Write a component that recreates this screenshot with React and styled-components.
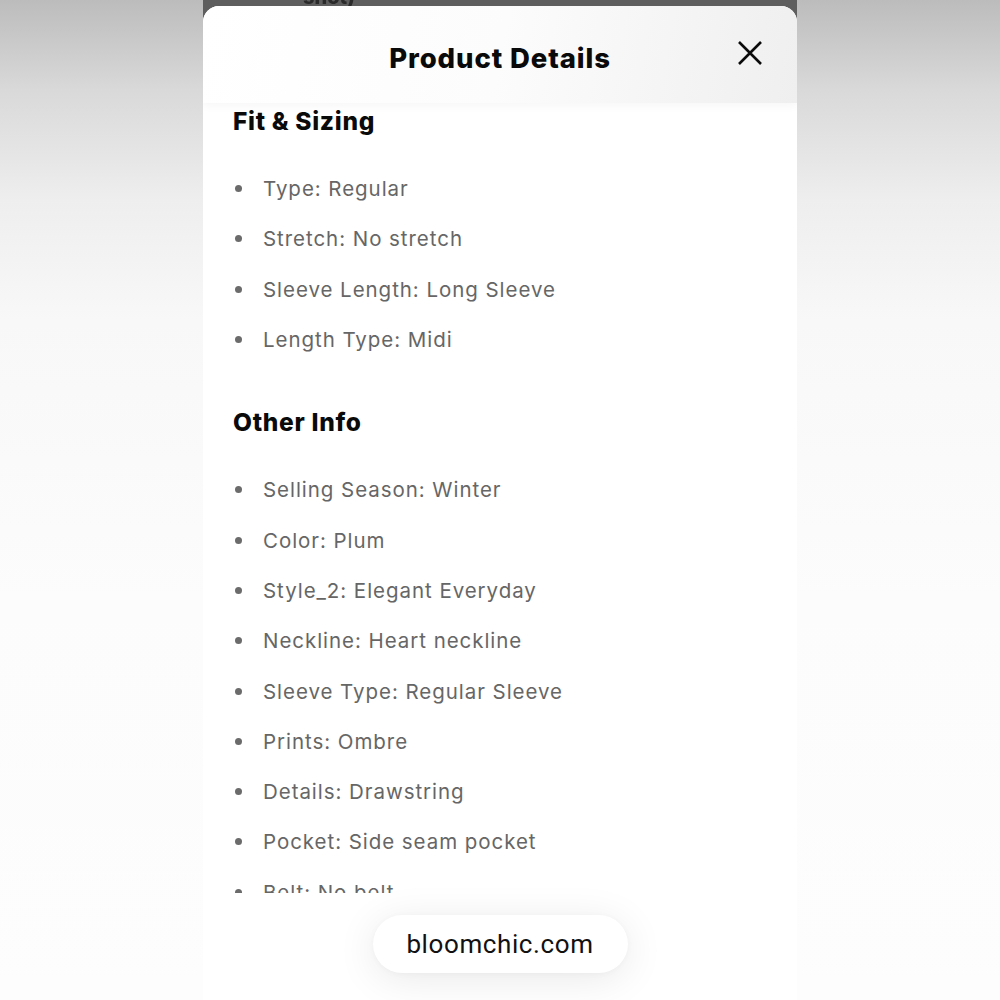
import React from "react";
import styled, { createGlobalStyle } from "styled-components";

const Global = createGlobalStyle`
  html, body { margin: 0; padding: 0; }
  body {
    width: 1000px; height: 1000px; overflow: hidden;
    font-family: "Inter", "Liberation Sans", sans-serif;
    background: linear-gradient(180deg, #bcbcbc 0px, #d9d9d9 90px, #eeeeee 200px, #f8f8f8 320px, #fcfcfc 600px, #fdfdfd 1000px);
  }
`;

const Stage = styled.div`
  width: 1000px;
  height: 1000px;
  display: flex;
  justify-content: center;
`;

const Phone = styled.div`
  width: 594px;
  height: 1000px;
  display: flex;
  flex-direction: column;
  background: #5e5e5e;
  overflow: hidden;
`;

const TopStrip = styled.div`
  height: 6px;
  flex: none;
  overflow: hidden;
  padding-left: 100px;
  font-weight: 800;
  font-size: 20px;
  line-height: 20px;
  color: #2a2a2a;
  filter: blur(0.6px);
  & > span { display: block; margin-top: -13px; }
`;

const Sheet = styled.div`
  flex: 1;
  display: flex;
  flex-direction: column;
  background: #ffffff;
  border-radius: 16px 16px 0 0;
  overflow: hidden;
`;

const Header = styled.header`
  height: 97px;
  flex: none;
  display: grid;
  grid-template-columns: 1fr auto 1fr;
  align-items: center;
  background: linear-gradient(100deg, #ffffff 0%, #fcfcfc 50%, #efefef 100%);
  box-shadow: 0 2px 10px rgba(0, 0, 0, 0.045);
  position: relative;
  z-index: 1;
`;

const Title = styled.h1`
  grid-column: 2;
  margin: 0;
  padding-top: 6px;
  font-size: 27.5px;
  font-weight: 800;
  color: #0a0a0a;
  letter-spacing: 0.9px;
`;

const Close = styled.button`
  grid-column: 3;
  justify-self: end;
  margin-right: 33px;
  margin-bottom: 4px;
  width: 28px;
  height: 28px;
  padding: 0;
  border: none;
  background: none;
  display: flex;
  align-items: center;
  justify-content: center;
`;

const Body = styled.div`
  height: 790px;
  flex: none;
  overflow: hidden;
  padding: 0 30px;
`;

const SectionTitle = styled.h2`
  margin: 0;
  padding-top: ${(p) => p.$top}px;
  font-size: 24.5px;
  font-weight: 800;
  color: #0a0a0a;
  line-height: 28px;
  letter-spacing: 0.7px;
`;

const List = styled.ul`
  list-style: none;
  margin: 0;
  padding: 41px 0 0 0;
  display: flex;
  flex-direction: column;
  gap: 25px;
`;

const Item = styled.li`
  display: flex;
  align-items: center;
  height: 25.3px;
  font-size: 20.5px;
  color: #666666;
  font-weight: 400;
  letter-spacing: 0.95px;
  &::before {
    content: "";
    width: 7px;
    height: 7px;
    border-radius: 50%;
    background: #6b6b6b;
    margin-left: 2px;
    margin-right: 21px;
    flex: none;
  }
`;

const Footer = styled.div`
  flex: 1;
  display: flex;
  justify-content: center;
  align-items: flex-start;
  padding-top: 22px;
  background: #ffffff;
`;

const Pill = styled.div`
  width: 255px;
  height: 58px;
  border-radius: 29px;
  background: #ffffff;
  display: flex;
  align-items: center;
  justify-content: center;
  font-family: "Roboto", "Liberation Sans", sans-serif;
  font-size: 26px;
  letter-spacing: 0.6px;
  color: #111111;
  box-shadow: 0 6px 40px rgba(0, 0, 0, 0.09), 0 1px 6px rgba(0, 0, 0, 0.03);
`;

const fit = [
  "Type: Regular",
  "Stretch: No stretch",
  "Sleeve Length: Long Sleeve",
  "Length Type: Midi",
];

const other = [
  "Selling Season: Winter",
  "Color: Plum",
  "Style_2: Elegant Everyday",
  "Neckline: Heart neckline",
  "Sleeve Type: Regular Sleeve",
  "Prints: Ombre",
  "Details: Drawstring",
  "Pocket: Side seam pocket",
  "Belt: No belt",
];

export default function App() {
  return (
    <>
      <Global />
      <Stage>
        <Phone>
          <TopStrip>
            <span>shot)</span>
          </TopStrip>
          <Sheet>
            <Header>
              <Title>Product Details</Title>
              <Close aria-label="Close">
                <svg width="26" height="26" viewBox="0 0 26 26">
                  <path d="M2 2 L24 24 M24 2 L2 24" stroke="#0a0a0a" strokeWidth="2.6" strokeLinecap="butt" />
                </svg>
              </Close>
            </Header>
            <Body>
              <SectionTitle $top={4}>Fit &amp; Sizing</SectionTitle>
              <List>
                {fit.map((t) => (
                  <Item key={t}>{t}</Item>
                ))}
              </List>
              <SectionTitle $top={56}>Other Info</SectionTitle>
              <List>
                {other.map((t) => (
                  <Item key={t}>{t}</Item>
                ))}
              </List>
            </Body>
            <Footer>
              <Pill>bloomchic.com</Pill>
            </Footer>
          </Sheet>
        </Phone>
      </Stage>
    </>
  );
}
